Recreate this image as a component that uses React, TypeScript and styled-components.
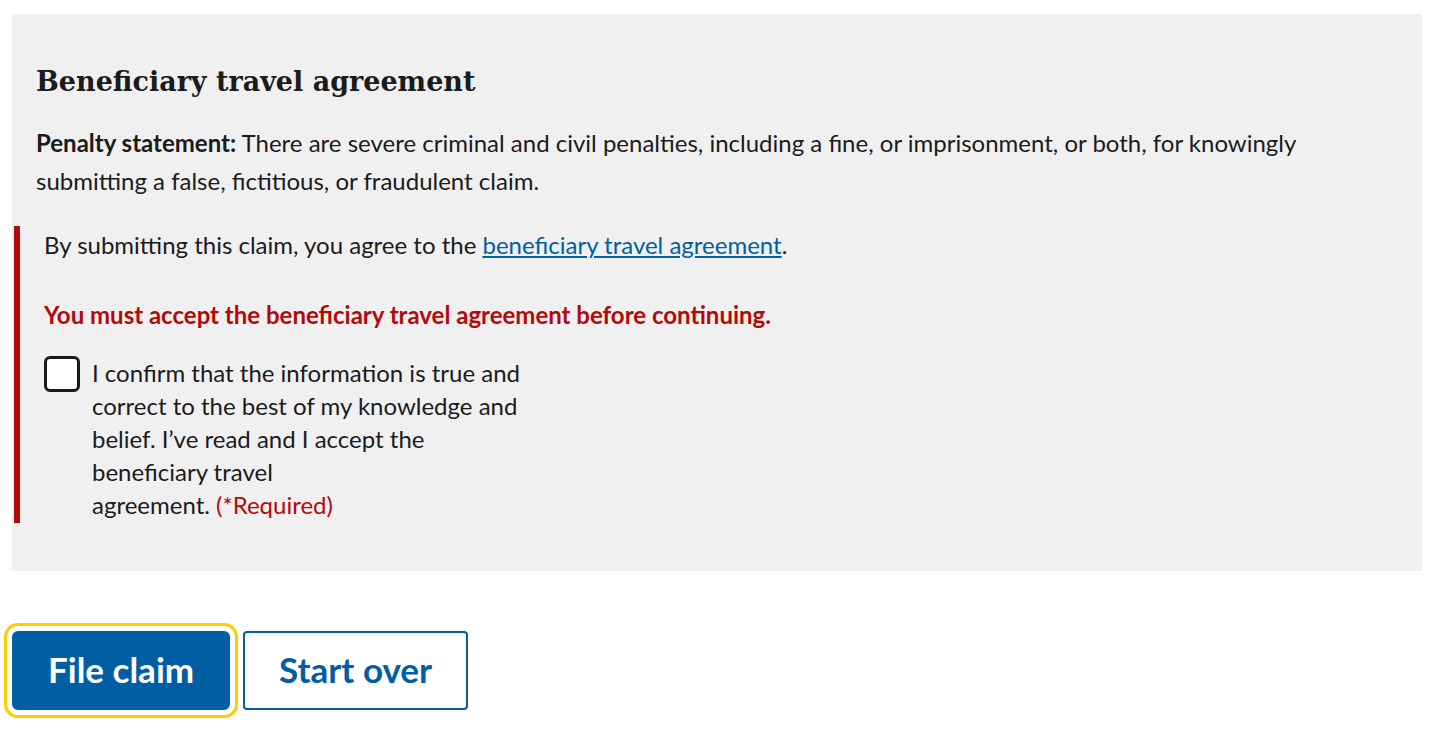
import React, { useState } from 'react';
import { styled, createGlobalStyle } from 'styled-components';

const GlobalStyle = createGlobalStyle`
  body {
    margin: 0;
    background: #ffffff;
    color: #1b1b1b;
    font-family: Lato, "Liberation Sans", sans-serif;
  }
  * {
    box-sizing: border-box;
  }
`;

const Page = styled.div`
  padding: 14px 15px 24px 12px;
`;

const Panel = styled.section`
  background-color: #f0f0f0;
  padding: 50px 24px 48px 24px;
`;

const Title = styled.h2`
  margin: 0 0 25px 0;
  font-family: "DejaVu Serif", "Liberation Serif", serif;
  font-size: 27px;
  font-weight: bold;
  line-height: 1.3;
`;

const Statement = styled.p`
  margin: 0 0 26px 0;
  font-size: 24px;
  line-height: 38px;
`;

const ErrorBlock = styled.div`
  margin-left: -22px;
  border-left: 6px solid #b50909;
  padding: 2px 0 2px 24px;
`;

const Agree = styled.p`
  margin: 0 0 36px 0;
  font-size: 24px;
  line-height: 34px;
`;

const Link = styled.a`
  color: #005ea2;
  text-decoration: underline;
  text-underline-offset: 2px;
`;

const ErrorMessage = styled.span`
  display: block;
  color: #b50909;
  font-size: 24px;
  font-weight: bold;
  line-height: 34px;
  margin-bottom: 24px;
`;

const CheckRow = styled.label`
  display: flex;
  align-items: flex-start;
  gap: 12px;
  cursor: pointer;
`;

const Box = styled.span<{ $checked: boolean }>`
  flex: none;
  width: 36px;
  height: 36px;
  border: 3px solid #1b1b1b;
  border-radius: 6px;
  background: ${(p) => (p.$checked ? '#005ea2' : '#ffffff')};
`;

const LabelText = styled.span`
  font-size: 24px;
  line-height: 33px;
`;

const Required = styled.span`
  color: #b50909;
`;

const Actions = styled.div`
  display: flex;
  gap: 13px;
  margin-top: 60px;
`;

const Button = styled.button<{ $primary?: boolean }>`
  height: 79px;
  padding: 0 34px 4px 34px;
  font-family: Lato, "Liberation Sans", sans-serif;
  font-size: 35px;
  font-weight: bold;
  cursor: pointer;
  color: ${(p) => (p.$primary ? '#ffffff' : '#005ea2')};
  background: ${(p) => (p.$primary ? '#005ea2' : '#ffffff')};
  border: 2px solid #005ea2;
  box-shadow: ${(p) => (p.$primary ? '0 0 0 5px #ffffff, 0 0 0 8px #ffcc00' : 'none')};
  border-radius: ${(p) => (p.$primary ? '6px' : '4px')};
`;

function App() {
  const [checked, setChecked] = useState(false);

  return (
    <Page>
      <GlobalStyle />
      <Panel>
        <Title>Beneficiary travel agreement</Title>
        <Statement>
          <b>Penalty statement:</b> There are severe criminal and civil penalties, including a fine, or imprisonment, or
          both, for knowingly submitting a false, fictitious, or fraudulent claim.
        </Statement>
        <ErrorBlock>
          <Agree>
            By submitting this claim, you agree to the <Link href="#">beneficiary travel agreement</Link>.
          </Agree>
          <ErrorMessage>You must accept the beneficiary travel agreement before continuing.</ErrorMessage>
          <CheckRow onClick={() => setChecked(!checked)}>
            <Box $checked={checked} />
            <LabelText>
              I confirm that the information is true and
              <br />
              correct to the best of my knowledge and
              <br />
              belief. I’ve read and I accept the
              <br />
              beneficiary travel
              <br />
              agreement. <Required>(*Required)</Required>
            </LabelText>
          </CheckRow>
        </ErrorBlock>
      </Panel>
      <Actions>
        <Button $primary>File claim</Button>
        <Button>Start over</Button>
      </Actions>
    </Page>
  );
}

export default App;
